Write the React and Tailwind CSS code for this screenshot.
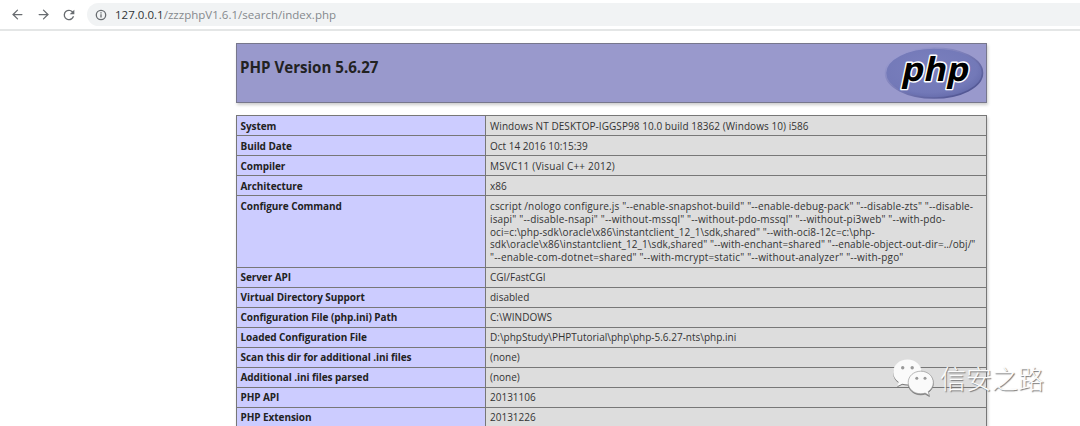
import { ArrowLeft, ArrowRight } from "lucide-react";

const rows = [
  { label: "System", lines: [["Windows NT DESKTOP-IGGSP98 10.0 build 18362 (Windows 10) i586", "tracking-[0.06px]"]], size: "h-5", pad: "pt-[4px]" },
  { label: "Build Date", lines: [["Oct 14 2016 10:15:39", ""]], size: "h-5", pad: "pt-[4px]" },
  { label: "Compiler", lines: [["MSVC11 (Visual C++ 2012)", "tracking-[0.21px]"]], size: "h-5", pad: "pt-[4px]" },
  { label: "Architecture", lines: [["x86", ""]], size: "h-5", pad: "pt-[4px]" },
  {
    label: "Configure Command",
    lines: [
      ['cscript /nologo configure.js "--enable-snapshot-build" "--enable-debug-pack" "--disable-zts" "--disable-', "tracking-[0.135px]"],
      ['isapi" "--disable-nsapi" "--without-mssql" "--without-pdo-mssql" "--without-pi3web" "--with-pdo-', "tracking-[0.165px]"],
      ['oci=c:\\php-sdk\\oracle\\x86\\instantclient_12_1\\sdk,shared" "--with-oci8-12c=c:\\php-', "tracking-[0.07px]"],
      ['sdk\\oracle\\x86\\instantclient_12_1\\sdk,shared" "--with-enchant=shared" "--enable-object-out-dir=../obj/"', "tracking-[0.065px]"],
      ['"--enable-com-dotnet=shared" "--with-mcrypt=static" "--without-analyzer" "--with-pgo"', "tracking-[0.185px]"],
    ],
    size: "h-[72px]",
    pad: "pt-[4px]",
  },
  { label: "Server API", lines: [["CGI/FastCGI", ""]], size: "h-5", pad: "pt-[3px]" },
  { label: "Virtual Directory Support", lines: [["disabled", ""]], size: "h-5", pad: "pt-[3px]" },
  { label: "Configuration File (php.ini) Path", lines: [["C:\\WINDOWS", ""]], size: "h-5", pad: "pt-[3px]" },
  { label: "Loaded Configuration File", lines: [["D:\\phpStudy\\PHPTutorial\\php\\php-5.6.27-nts\\php.ini", ""]], size: "h-5", pad: "pt-[3px]" },
  { label: "Scan this dir for additional .ini files", lines: [["(none)", ""]], size: "h-5", pad: "pt-[3px]" },
  { label: "Additional .ini files parsed", lines: [["(none)", ""]], size: "h-5", pad: "pt-[3px]" },
  { label: "PHP API", lines: [["20131106", ""]], size: "h-5", pad: "pt-[3px]" },
  { label: "PHP Extension", lines: [["20131226", ""]], size: "h-5", pad: "pt-[3px]" },
];

function Toolbar() {
  return (
    <header className="flex h-[31px] shrink-0 items-center border-b-2 border-[#e4e6e6] bg-white pl-[10px] text-[#686c70]">
      <ArrowLeft size={15} strokeWidth={2} />
      <ArrowRight size={15} strokeWidth={2} className="ml-[11px]" />
      <svg viewBox="0 0 24 24" className="ml-[10px] size-[16px]" fill="currentColor">
        <path d="M17.65 6.35A7.96 7.96 0 0 0 12 4a8 8 0 1 0 7.73 10h-2.08A6 6 0 1 1 12 6c1.66 0 3.14.69 4.22 1.78L13 11h7V4z" />
      </svg>
      <div className="ml-[10px] flex h-[23px] flex-1 items-center rounded-l-full bg-[#f1f3f4] pl-[8px]">
        <svg viewBox="0 0 12 12" className="size-[12px]" fill="none" stroke="currentColor" strokeWidth="1.3">
          <circle cx="6" cy="6" r="4.7" />
          <path d="M6 5.3v3.2M6 3.2v1.3" />
        </svg>
        <span className="ml-[8px] text-[11.5px] leading-[16px] tracking-[0.02px] whitespace-pre text-[#85898d]">
          <span className="text-[#303337]">127.0.0.1</span>/zzzphpV1.6.1/search/index.php
        </span>
      </div>
    </header>
  );
}

function PhpLogo() {
  return (
    <svg viewBox="0 0 100 54" className="h-[54px] w-[100px] shrink-0">
      <defs>
        <radialGradient id="oval" cx="45%" cy="40%" r="65%">
          <stop offset="0" stopColor="#7b80be" />
          <stop offset="0.75" stopColor="#7379b8" />
          <stop offset="1" stopColor="#6268a8" />
        </radialGradient>
        <linearGradient id="rim" x1="0" y1="0" x2="1" y2="1">
          <stop offset="0" stopColor="#a6a6d8" />
          <stop offset="0.5" stopColor="#7679b4" />
          <stop offset="1" stopColor="#454a88" />
        </linearGradient>
      </defs>
      <ellipse cx="50" cy="27" rx="48.5" ry="25" fill="url(#oval)" stroke="url(#rim)" strokeWidth="1.6" />
      <g
        transform="translate(16.5 34.5) skewX(-12)"
        className="font-['Open_Sans',sans-serif] text-[33px] font-bold"
        strokeLinejoin="round"
      >
        <text
          textLength="67"
          lengthAdjust="spacingAndGlyphs"
          fill="#000"
          stroke="#fff"
          strokeWidth="2.8"
          paintOrder="stroke"
        >
          php
        </text>
      </g>
    </svg>
  );
}

function Watermark() {
  return (
    <div className="absolute top-[358px] left-[892px] flex items-center">
      <svg viewBox="0 0 44 40" className="h-[40px] w-[44px] drop-shadow-[0.5px_1px_0.5px_#777]" fill="#fafafa">
        <path d="M15.5 1.5C7.5 1.5 1.2 7 1.2 14.2c0 4.1 2.1 7.4 5.4 9.8L5.2 28.2l5.1-2.5c1.7.5 3.5.8 5.2.8 8 0 14.2-5.4 14.2-12.3S23.5 1.5 15.5 1.5Z" />
        <path d="M28.8 13.2c-7.2 0-12.6 5-12.6 11.3s5.4 11.3 12.6 11.3c1.5 0 3-.3 4.3-.7l4.3 2.4-1.2-3.9c3.2-2.3 5.1-5.4 5.1-9.1 0-6.3-5.4-11.3-12.5-11.3Z" stroke="#999" strokeWidth="0.7" />
        <g fill="#999">
          <circle cx="10.7" cy="9.8" r="1.7" />
          <circle cx="20.2" cy="9.8" r="1.7" />
          <circle cx="24.8" cy="20.3" r="1.5" />
          <circle cx="33" cy="20.3" r="1.5" />
        </g>
      </svg>
      <span className="ml-[4px] font-['Noto_Sans_CJK_SC',sans-serif] text-[26px] leading-[40px] font-light whitespace-nowrap text-[#fcfcfc] [text-shadow:1px_1px_1px_#777]">
        信安之路
      </span>
    </div>
  );
}

export default function App() {
  return (
    <div className="relative flex h-[426px] w-[1080px] flex-col overflow-hidden bg-white font-['Open_Sans','Noto_Sans',sans-serif]">
      <Toolbar />
      <main className="ml-[236px] w-[751px] pt-[12px] text-[#222]">
        <section className="flex h-[60px] justify-between border border-[#77778c] bg-[#9999cc] pt-[2px] pr-[2px] pl-[3px] shadow-[1px_2px_3px_#ccc]">
          <h1 className="pt-[10px] text-[15.1px] leading-[22px] font-bold">PHP Version 5.6.27</h1>
          <PhpLogo />
        </section>
        <section className="mt-[12px] border-x border-t border-[#777] text-[10px] shadow-[1px_2px_3px_#ccc]">
          {rows.map(({ label, lines, size, pad }) => (
            <div key={label} className={`flex border-b border-[#777] leading-[12.8px] ${size}`}>
              <div className={`w-[249px] shrink-0 border-r border-[#777] bg-[#ccccff] pl-[3.5px] font-bold tracking-[-0.07px] whitespace-pre ${pad}`}>
                {label}
              </div>
              <div className={`flex-1 bg-[#dddddd] pl-[4px] text-[#333] ${pad}`}>
                {lines.map(([line, tracking]) => (
                  <div key={line} className={`whitespace-pre ${tracking}`}>{line}</div>
                ))}
              </div>
            </div>
          ))}
        </section>
      </main>
      <Watermark />
    </div>
  );
}
